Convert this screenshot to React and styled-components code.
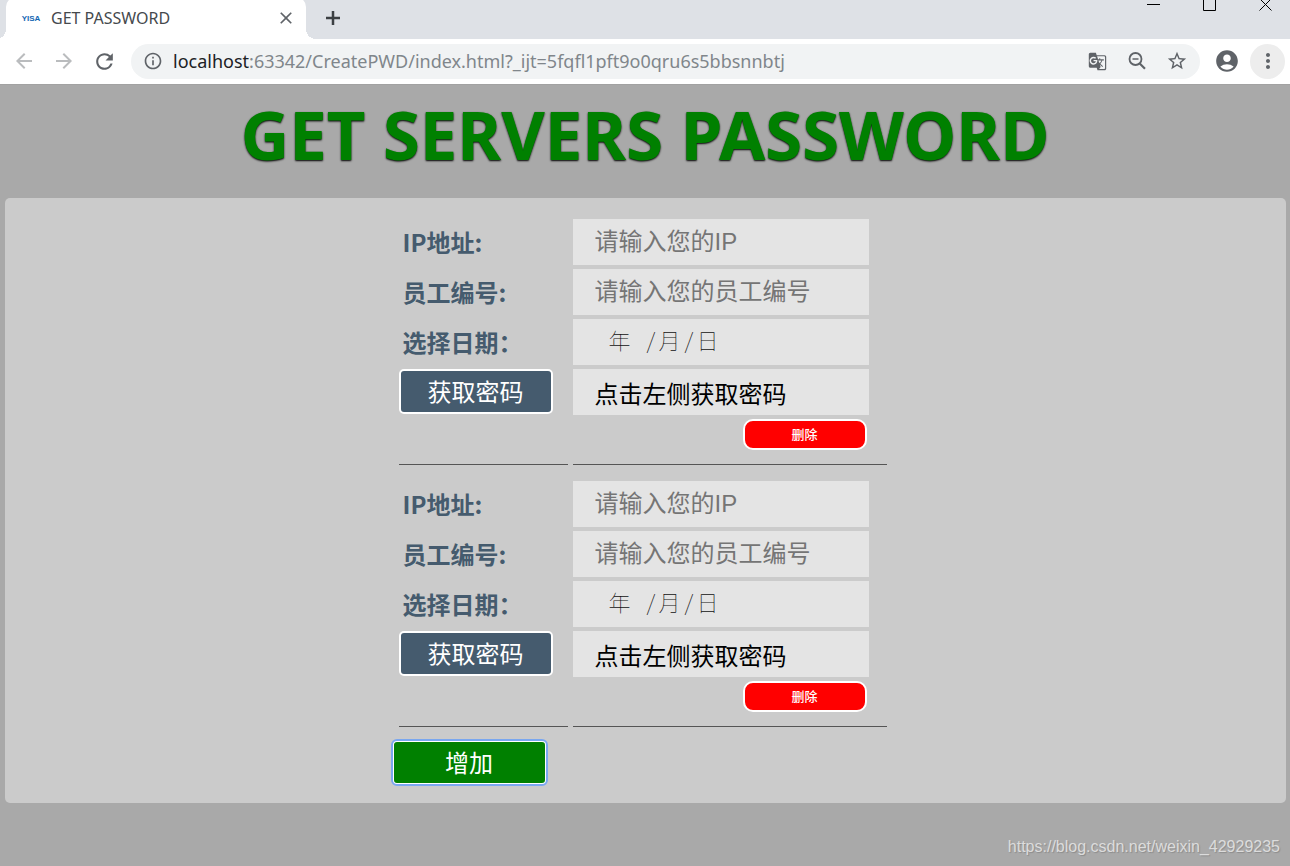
import { useState } from "react";
import styled, { createGlobalStyle } from "styled-components";
import {
  MdAccountCircle,
  MdArrowBack,
  MdArrowForward,
  MdClose,
  MdGTranslate,
  MdInfoOutline,
  MdMoreVert,
  MdRefresh,
  MdStarBorder,
} from "react-icons/md";

const GlobalStyle = createGlobalStyle`
  * {
    box-sizing: border-box;
  }
  body {
    margin: 0;
    background-color: #a9a9a9;
    font-family: "Noto Sans", "Noto Sans CJK SC", sans-serif;
  }
  button, input {
    font-family: inherit;
  }
`;

const Window = styled.div`
  display: flex;
  flex-direction: column;
  min-height: 100vh;
`;

const TabStrip = styled.div`
  display: flex;
  justify-content: space-between;
  height: 39px;
  padding-left: 6px;
  background-color: #dee1e6;
  overflow: hidden;
`;

const Tabs = styled.div`
  display: flex;
  align-items: flex-end;
`;

const Tab = styled.div`
  position: relative;
  display: flex;
  align-items: center;
  width: 300px;
  height: 42px;
  padding: 0 10px 0 15px;
  border-radius: 10px 10px 0 0;
  background-color: white;
  &::before,
  &::after {
    content: "";
    position: absolute;
    bottom: 0;
    width: 10px;
    height: 10px;
  }
  &::before {
    left: -10px;
    background: radial-gradient(circle at 0 0, #dee1e6 10px, white 10px);
  }
  &::after {
    right: -10px;
    background: radial-gradient(circle at 100% 0, #dee1e6 10px, white 10px);
  }
`;

const TabTitle = styled.span`
  flex: 1;
  margin-left: 10px;
  font-size: 16px;
  color: #45494d;
`;

const IconButton = styled.button`
  display: flex;
  align-items: center;
  justify-content: center;
  width: ${(props) => props.$width || 40}px;
  height: 34px;
  padding: 0;
  border: none;
  background: none;
  color: ${(props) => props.$color || "#5f6368"};
`;

const NewTab = styled(IconButton)`
  margin-left: 7px;
  height: 42px;
  color: #3c4043;
`;

const Controls = styled.div`
  display: flex;
  align-items: flex-start;
  gap: 43px;
  padding-right: 18px;
`;

const ControlButton = styled.button`
  display: flex;
  padding: 0;
  border: none;
  background: none;
`;

const Toolbar = styled.div`
  display: flex;
  align-items: center;
  height: 46px;
  padding: 0 5px 1px 4px;
  background-color: white;
  border-bottom: 1px solid #a2a2a2;
`;

const AddressBar = styled.div`
  flex: 1;
  display: flex;
  align-items: center;
  height: 35px;
  margin: 0 7px;
  padding: 0 3px 0 2px;
  border-radius: 18px;
  background-color: #f1f3f4;
`;

const Url = styled.div`
  flex: 1;
  font-size: 18px;
  color: #80868b;
  white-space: nowrap;
  span {
    color: #202124;
  }
`;

const MenuButton = styled(IconButton)`
  height: 35px;
  margin-left: 3px;
  border-radius: 50%;
  background-color: #ededed;
`;

const Heading = styled.h1`
  margin: 0;
  height: 113px;
  font-size: 67px;
  line-height: 98px;
  font-weight: bold;
  text-align: center;
  color: green;
  text-shadow: 0 1px 2px black;
`;

const Panel = styled.main`
  margin: 0 4px 0 5px;
  padding: 21px 0 18px;
  border-radius: 5px;
  background-color: #cbcbcb;
`;

const Content = styled.div`
  width: 100%;
  max-width: 508px;
  margin: 0 auto;
`;

const Groups = styled.div`
  display: flex;
  flex-direction: column;
  gap: 16px;
  margin-bottom: 13px;
  padding-left: 7px;
`;

const Group = styled.form`
  display: grid;
  grid-template-columns: 169px 314px;
  grid-auto-rows: 46px;
  gap: 4px 5px;
`;

const Label = styled.label`
  padding-left: 4px;
  font-family: "Noto Sans CJK SC", sans-serif;
  font-size: 24px;
  line-height: 46px;
  font-weight: bold;
  color: #455b6e;
`;

const Input = styled.input`
  width: 296px;
  height: 46px;
  padding: 0 22px;
  border: none;
  border-radius: 0;
  background-color: #e4e4e4;
  font-family: "Liberation Sans", "Noto Sans CJK SC", sans-serif;
  font-size: 24px;
  font-weight: 400;
  color: black;
  &::placeholder {
    color: #757575;
    opacity: 1;
  }
`;

const DateField = styled.div`
  display: flex;
  align-items: center;
  width: 296px;
  height: 46px;
  padding: 0 0 6px 36px;
  background-color: #e4e4e4;
  font-family: "Noto Sans CJK SC", sans-serif;
  font-size: 22px;
  font-weight: 100;
  color: #222;
`;

const DatePart = styled.input`
  width: ${(props) => (props.$year ? 38 : 26)}px;
  height: 40px;
  padding: 0;
  border: none;
  background: none;
  font-size: 22px;
  font-weight: 100;
  &::placeholder {
    color: #111;
    opacity: 1;
  }
`;

const Slash = styled.span`
  width: 12px;
`;

const Button = styled.button`
  width: 154px;
  height: 45px;
  padding: 0 0 2px;
  border: 2px solid white;
  border-radius: 5px;
  background-color: #455b6e;
  font-size: 24px;
  color: white;
`;

const AddButton = styled(Button)`
  display: block;
  width: 155px;
  background-color: green;
  outline: 2px solid #7aa7f0;
  outline-offset: -1px;
`;

const DeleteButton = styled(Button)`
  width: 124px;
  height: 31px;
  border-radius: 10px;
  background-color: red;
  font-size: 13px;
  font-weight: 500;
`;

const LineCell = styled.div`
  display: flex;
  align-items: flex-start;
  justify-content: flex-end;
  padding-right: 20px;
  border-bottom: 1px solid #555;
`;

const Footer = styled.footer`
  margin-top: auto;
  padding: 0 10px 9px 0;
  font-family: "Liberation Sans", sans-serif;
  font-size: 16px;
  line-height: 20px;
  text-align: right;
  color: #dcdcdc;
  text-shadow: 1px 1px 1px #8c8c8c;
`;

const Logo = () => (
  <svg width="20" height="20" viewBox="0 0 20 20">
    <text
      x="10"
      y="13"
      textAnchor="middle"
      fontFamily="Liberation Sans, sans-serif"
      fontSize="8"
      fontWeight="bold"
      fill="#1467b3"
    >
      YISA
    </text>
  </svg>
);

const PlusIcon = () => (
  <svg width="16" height="16" stroke="currentColor" strokeWidth="2.500">
    <path d="M8 1v14M1 8h14" />
  </svg>
);

const ZoomOutIcon = () => (
  <svg width="18" height="18" fill="none" stroke="currentColor" strokeWidth="1.800">
    <circle cx="7.500" cy="7" r="6" />
    <path d="M11.500 11.200l5.500 5.500" strokeWidth="2.200" />
    <path d="M4.500 7h6" strokeWidth="1.500" />
  </svg>
);

const PasswordForm = ({ id, onDelete }) => {
  const [result, setResult] = useState("点击左侧获取密码");

  return (
    <Group onSubmit={(e) => e.preventDefault()}>
      <Label htmlFor={`ip-${id}`}>IP地址:</Label>
      <Input id={`ip-${id}`} placeholder="请输入您的IP" />
      <Label htmlFor={`staff-${id}`}>员工编号:</Label>
      <Input id={`staff-${id}`} placeholder="请输入您的员工编号" />
      <Label htmlFor={`year-${id}`}>选择日期：</Label>
      <DateField>
        <DatePart $year id={`year-${id}`} placeholder="年" />
        <Slash>/</Slash>
        <DatePart aria-label="月" placeholder="月" />
        <Slash>/</Slash>
        <DatePart aria-label="日" placeholder="日" />
      </DateField>
      <Button type="submit">获取密码</Button>
      <Input
        aria-label="密码"
        value={result}
        onChange={(e) => setResult(e.target.value)}
      />
      <LineCell />
      <LineCell>
        <DeleteButton type="button" onClick={onDelete}>
          删除
        </DeleteButton>
      </LineCell>
    </Group>
  );
};

const Browser = () => (
  <header>
    <TabStrip>
      <Tabs>
        <Tab>
          <Logo />
          <TabTitle>GET PASSWORD</TabTitle>
          <IconButton $width={20} aria-label="Close tab">
            <MdClose size={20} />
          </IconButton>
        </Tab>
        <NewTab aria-label="New tab">
          <PlusIcon />
        </NewTab>
      </Tabs>
      <Controls>
        <ControlButton aria-label="Minimize">
          <svg width="13" height="12" stroke="black">
            <path d="M0 4.5h13" />
          </svg>
        </ControlButton>
        <ControlButton aria-label="Maximize">
          <svg width="13" height="12" stroke="black" fill="none">
            <path d="M.5 -2v12.5h12v-12.500" />
          </svg>
        </ControlButton>
        <ControlButton aria-label="Close">
          <svg width="13" height="12" stroke="black">
            <path d="M0.500 -1.500l12 12M12.500 -1.500l-12 12" />
          </svg>
        </ControlButton>
      </Controls>
    </TabStrip>
    <Toolbar>
      <IconButton $color="#babcbe" aria-label="Back">
        <MdArrowBack size={24} />
      </IconButton>
      <IconButton $color="#babcbe" aria-label="Forward">
        <MdArrowForward size={24} />
      </IconButton>
      <IconButton aria-label="Reload">
        <MdRefresh size={25} />
      </IconButton>
      <AddressBar>
        <IconButton aria-label="Site information">
          <MdInfoOutline size={20} />
        </IconButton>
        <Url>
          <span>localhost</span>:63342/CreatePWD/index.html?_ijt=5fqfl1pft9o0qru6s5bbsnnbtj
        </Url>
        <IconButton aria-label="Translate">
          <MdGTranslate size={19} />
        </IconButton>
        <IconButton aria-label="Zoom">
          <ZoomOutIcon />
        </IconButton>
        <IconButton aria-label="Bookmark">
          <MdStarBorder size={22} />
        </IconButton>
      </AddressBar>
      <IconButton aria-label="Profile">
        <MdAccountCircle size={26} />
      </IconButton>
      <MenuButton $width={35} aria-label="Menu">
        <MdMoreVert size={24} />
      </MenuButton>
    </Toolbar>
  </header>
);

const App = () => {
  const [forms, setForms] = useState([1, 2]);

  const addForm = () => setForms([...forms, Math.max(0, ...forms) + 1]);
  const removeForm = (id) => setForms(forms.filter((form) => form !== id));

  return (
    <Window>
      <GlobalStyle />
      <Browser />
      <Heading>GET SERVERS PASSWORD</Heading>
      <Panel>
        <Content>
          <Groups>
            {forms.map((id) => (
              <PasswordForm key={id} id={id} onDelete={() => removeForm(id)} />
            ))}
          </Groups>
          <AddButton onClick={addForm}>增加</AddButton>
        </Content>
      </Panel>
      <Footer>https://blog.csdn.net/weixin_42929235</Footer>
    </Window>
  );
};

export default App;
